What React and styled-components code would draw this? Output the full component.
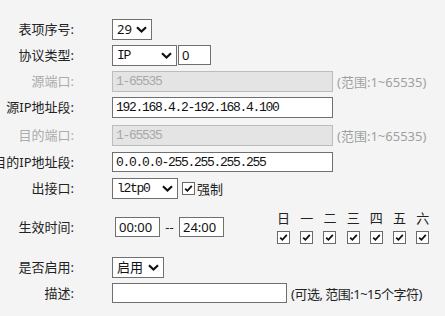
import React from 'react'
import styled, { createGlobalStyle } from 'styled-components'

const GlobalStyle = createGlobalStyle`
  html, body {
    margin: 0;
    padding: 0;
    background: #f4f4f4;
  }
  body {
    font-family: 'Noto Sans', 'Noto Sans CJK SC', sans-serif;
    font-size: 13px;
    color: #333;
    overflow: hidden;
  }
`

const cjk = `'Noto Sans', 'Noto Sans CJK SC', sans-serif`
const mono = `'Liberation Mono', 'Noto Sans CJK SC', monospace`

const Form = styled.div`
  display: flex;
  flex-direction: column;
  padding-top: 19px;
  width: 445px;
  height: 316px;
  box-sizing: border-box;
`

const Row = styled.div`
  display: flex;
  align-items: center;
  height: ${p => p.$h || 21}px;
  margin-top: ${p => p.$mt || 0}px;
  flex: none;
`

const Label = styled.div`
  width: 74px;
  flex: none;
  display: flex;
  justify-content: flex-end;
  white-space: nowrap;
  margin-right: 38px;
  font-family: ${cjk};
  font-size: 13px;
  line-height: 21px;
  color: ${p => (p.$disabled ? '#ababab' : '#222')};
`

const Select = styled.div`
  box-sizing: border-box;
  width: ${p => p.$w}px;
  height: 21px;
  border: 1px solid #707070;
  background: #fff;
  display: flex;
  align-items: center;
  justify-content: space-between;
  padding: 0 4px 0 4px;
  flex: none;
`

const SelectText = styled.span`
  font-family: ${p => (p.$mono ? mono : cjk)};
  font-size: 13px;
  letter-spacing: ${p => (p.$mono ? '-1.3px' : '0')};
  color: #111;
  line-height: 19px;
`

const Input = styled.div`
  box-sizing: border-box;
  width: ${p => p.$w}px;
  height: ${p => p.$h || 21}px;
  border: 1px solid ${p => (p.$disabled ? '#bcbcbc' : '#707070')};
  background: ${p => (p.$disabled ? '#e4e4e4' : '#fff')};
  margin-left: ${p => p.$ml || 0}px;
  padding-left: 3px;
  display: flex;
  align-items: center;
  font-family: ${p => (p.$mono ? mono : cjk)};
  font-size: 13px;
  letter-spacing: ${p => (p.$mono ? '-1.3px' : '0')};
  color: ${p => (p.$disabled ? '#a8a8a8' : '#111')};
  white-space: nowrap;
  overflow: hidden;
  flex: none;
`

const Hint = styled.span`
  margin-left: 4px;
  font-family: ${cjk};
  font-size: 13px;
  letter-spacing: ${p => p.$ls || 0}px;
  color: ${p => p.$color || '#a0a0a0'};
  white-space: nowrap;
`

const Dash = styled.span`
  width: 19px;
  text-align: center;
  font-family: ${cjk};
  font-size: 13px;
  color: #222;
  flex: none;
`

const BoxWrap = styled.span`
  width: 13px;
  height: 13px;
  box-sizing: border-box;
  border: 1px solid #6a6a6a;
  background: #fff;
  display: inline-flex;
  flex: none;
  margin-left: ${p => p.$ml || 0}px;
`

const CheckText = styled.span`
  margin-left: 2px;
  font-family: ${cjk};
  font-size: 13px;
  color: #222;
`

const Days = styled.div`
  display: grid;
  grid-template-columns: repeat(7, 23.2px);
  margin-left: 48px;
  align-self: stretch;
`

const Day = styled.div`
  display: flex;
  flex-direction: column;
  align-items: center;
  justify-content: space-between;
  padding-top: 1px;
`

const DayName = styled.span`
  font-family: ${cjk};
  font-size: 13px;
  line-height: 14px;
  color: #222;
`

const Chevron = () => (
  <svg width="11" height="7" viewBox="0 0 11 7">
    <path d="M1 1.2 L5.5 5.5 L10 1.2" fill="none" stroke="#111" strokeWidth="2.2" />
  </svg>
)

const Check = ({ ml }) => (
  <BoxWrap $ml={ml}>
    <svg width="11" height="11" viewBox="0 0 11 11">
      <path d="M2.2 5.6 L4.4 7.8 L8.8 2.8" fill="none" stroke="#111" strokeWidth="1.8" />
    </svg>
  </BoxWrap>
)

const days = ['日', '一', '二', '三', '四', '五', '六']

export default function App() {
  return (
    <>
      <GlobalStyle />
      <Form>
        <Row>
          <Label>表项序号:</Label>
          <Select $w={40}>
            <SelectText>29</SelectText>
            <Chevron />
          </Select>
        </Row>
        <Row $mt={5} $h={20}>
          <Label>协议类型:</Label>
          <Select $w={65}>
            <SelectText $mono>IP</SelectText>
            <Chevron />
          </Select>
          <Input $w={33} $h={20} $ml={1}>0</Input>
        </Row>
        <Row $mt={6}>
          <Label $disabled>源端口:</Label>
          <Input $w={221} $disabled $mono>1-65535</Input>
          <Hint>(范围:1~65535)</Hint>
        </Row>
        <Row $mt={5}>
          <Label>源IP地址段:</Label>
          <Input $w={221} $mono>192.168.4.2-192.168.4.100</Input>
        </Row>
        <Row $mt={7}>
          <Label $disabled>目的端口:</Label>
          <Input $w={221} $disabled $mono>1-65535</Input>
          <Hint>(范围:1~65535)</Hint>
        </Row>
        <Row $mt={6} $h={20}>
          <Label>目的IP地址段:</Label>
          <Input $w={221} $h={20} $mono>0.0.0.0-255.255.255.255</Input>
        </Row>
        <Row $mt={6} $h={20}>
          <Label>出接口:</Label>
          <Select $w={66}>
            <SelectText $mono>l2tp0</SelectText>
            <Chevron />
          </Select>
          <Check ml={4} />
          <CheckText>强制</CheckText>
        </Row>
        <Row $mt={12} $h={34}>
          <Label>生效时间:</Label>
          <Input $w={45} $h={20} $ml={3}>00:00</Input>
          <Dash>--</Dash>
          <Input $w={45} $h={20}>24:00</Input>
          <Days>
            {days.map(d => (
              <Day key={d}>
                <DayName>{d}</DayName>
                <Check />
              </Day>
            ))}
          </Days>
        </Row>
        <Row $mt={13} $h={20}>
          <Label>是否启用:</Label>
          <Select $w={52}>
            <SelectText>启用</SelectText>
            <Chevron />
          </Select>
        </Row>
        <Row $mt={6} $h={20}>
          <Label>描述:</Label>
          <Input $w={175} $h={20} />
          <Hint $color="#222" $ls={-0.5}>(可选, 范围:1~15个字符)</Hint>
        </Row>
      </Form>
    </>
  )
}
